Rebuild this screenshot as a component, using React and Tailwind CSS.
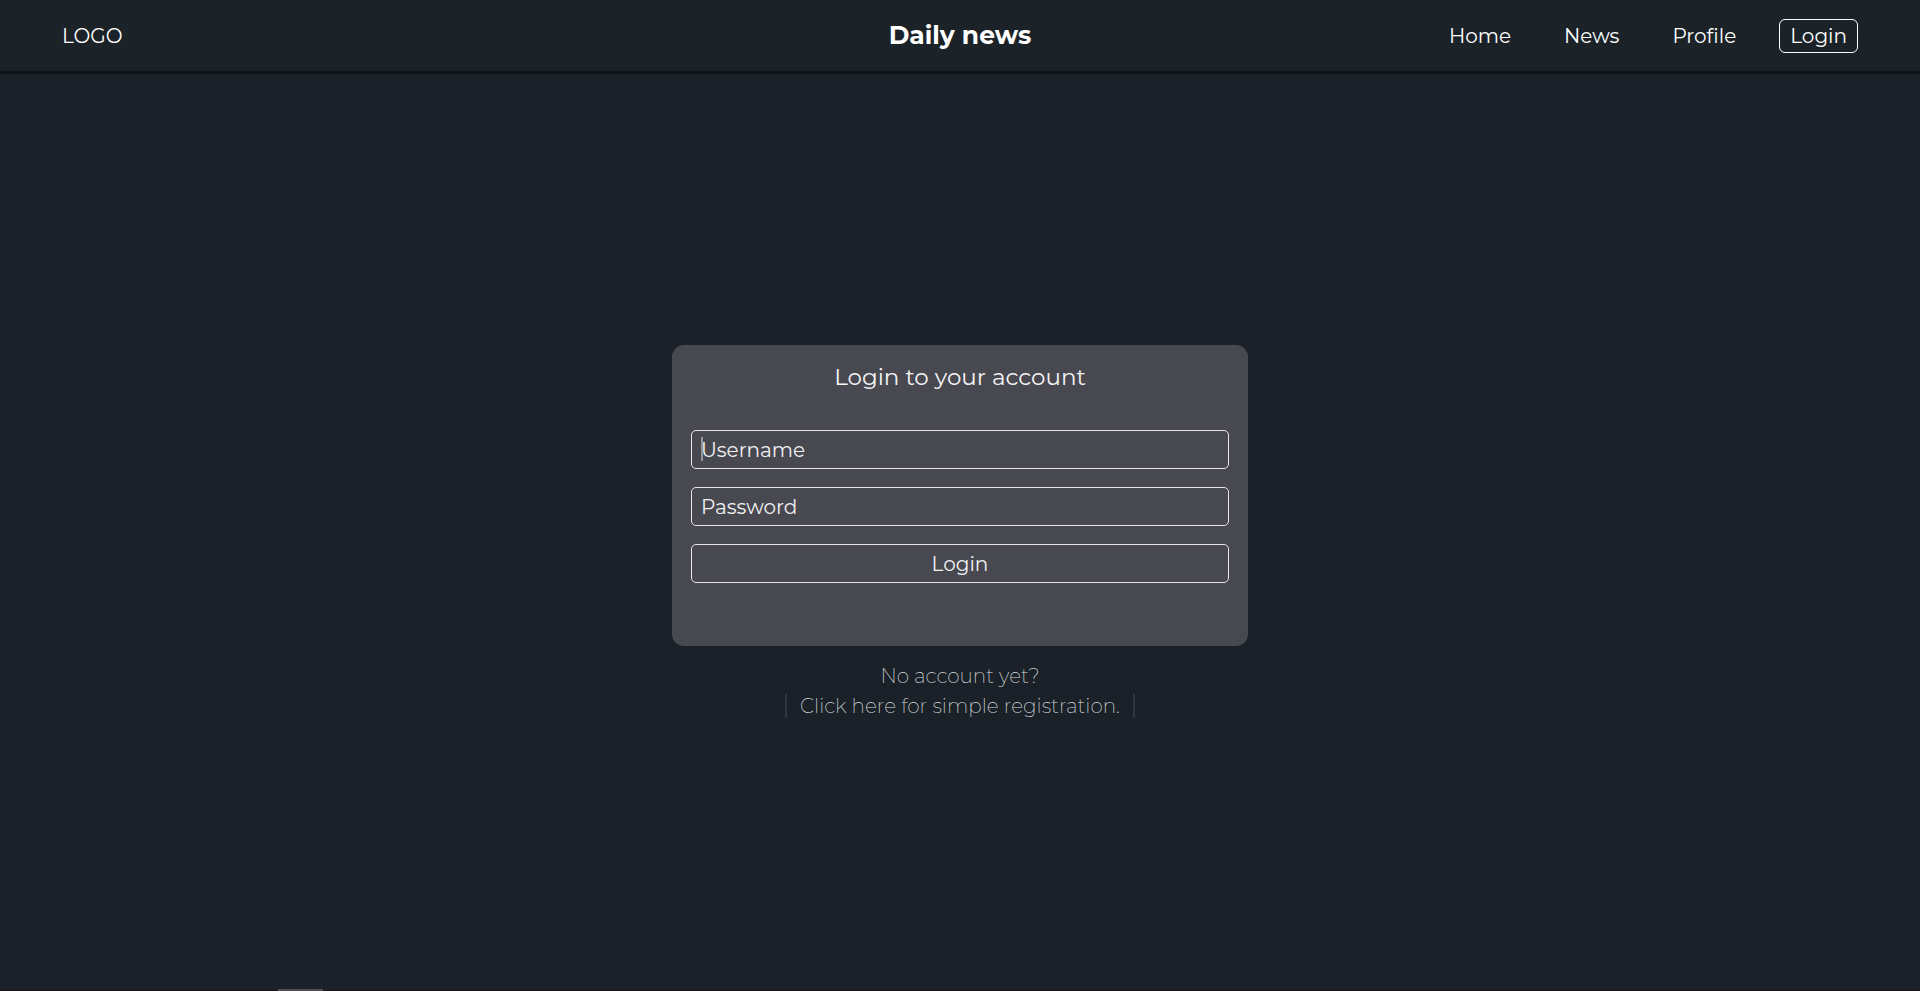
const navLinks = ["Home", "News", "Profile"];

function Header() {
  return (
    <header className="grid grid-cols-[1fr_auto_1fr] items-center self-start border-b-3 border-[#0f1618] bg-[#1b2328] px-[62px] py-[17px] text-white">
      <a href="#" className="justify-self-start text-[20px] leading-[24px]">LOGO</a>
      <h1 className="text-[25px] leading-[37px] font-bold">Daily news</h1>
      <nav className="flex items-center justify-self-end text-[20px] leading-[24px]">
        <div className="mr-[43px] flex gap-[53px]">
          {navLinks.map((label) => (
            <a key={label} href="#">{label}</a>
          ))}
        </div>
        <button type="button" className="rounded-md border border-white px-[10px] py-1">Login</button>
      </nav>
    </header>
  );
}

function LoginCard() {
  const field =
    "h-[39px] w-full rounded-[5px] border border-[#e6e6e8] bg-transparent px-[9px] text-[20px] leading-[24px] text-[#f0f0f2] outline-none placeholder:text-[#f0f0f2] placeholder:opacity-100";
  return (
    <form
      onSubmit={(e) => e.preventDefault()}
      className="flex w-[30%] flex-col gap-[18px] justify-self-center rounded-xl bg-[#484850] px-[19px] pt-[17px] pb-[63px]"
    >
      <h2 className="mb-5 text-center text-[23px] leading-[30px] text-[#f4f4f6]">Login to your account</h2>
      <div className="relative flex">
        <input type="text" aria-label="Username" placeholder="Username" className={field} />
        <span className="absolute top-[7px] left-[10px] h-6 w-[2px] bg-[#95959a]" />
      </div>
      <input type="password" aria-label="Password" placeholder="Password" className={field} />
      <button type="submit" className={field}>Login</button>
    </form>
  );
}

export default function App() {
  return (
    <div className="grid min-h-screen grid-rows-[1fr_auto_1fr] bg-[#1a2128] font-['Montserrat','Inter',sans-serif]">
      <Header />
      <LoginCard />
      <div className="flex flex-col items-center justify-between text-[20px] leading-[24px] font-extralight text-[#d8dcde]">
        <div className="flex flex-col items-center gap-[6px] pt-[18px]">
          <p>No account yet?</p>
          <a href="#" className="border-x-2 border-[#2e353c] px-[13px]">Click here for simple registration.</a>
        </div>
        <div className="flex h-[2px] w-full bg-[#1c1b1d] pl-[278px]">
          <div className="w-[45px] bg-[#4e4e50]" />
        </div>
      </div>
    </div>
  );
}
